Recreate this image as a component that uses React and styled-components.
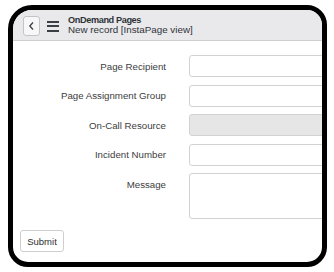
import React from 'react';
import styled, { createGlobalStyle } from 'styled-components';

const GlobalStyle = createGlobalStyle`
  html, body {
    margin: 0;
    padding: 0;
    background: #ffffff;
  }
  body {
    font-family: 'Liberation Sans', Arial, Helvetica, sans-serif;
  }
`

const Device = styled.div`
  box-sizing: border-box;
  width: 319px;
  height: 262px;
  margin: 5px 0 0 8px;
  border: 5px solid #000;
  border-radius: 24px 20px 20px 20px;
  overflow: hidden;
  background: #fff;
  display: flex;
  flex-direction: column;
`

const Header = styled.div`
  box-sizing: border-box;
  height: 31px;
  flex-shrink: 0;
  display: flex;
  align-items: center;
  padding-left: 10px;
  padding-top: 2px;
  background: #e9e9eb;
  border-bottom: 1px solid #cfcfd2;
`

const BackButton = styled.div`
  box-sizing: border-box;
  width: 17px;
  height: 20px;
  display: flex;
  align-items: center;
  justify-content: center;
  background: #f7f7f8;
  border: 1px solid #c4c4c8;
  border-radius: 3px;
`

const Burger = styled.div`
  display: flex;
  flex-direction: column;
  gap: 2.5px;
  margin-left: 7px;
  span {
    display: block;
    width: 12px;
    height: 2px;
    background: #3a3f45;
  }
`

const TitleBlock = styled.div`
  display: flex;
  flex-direction: column;
  margin-left: 9px;
  margin-top: -3px;
  color: #2e3338;
  line-height: 10px;
`

const Title = styled.div`
  font-size: 9.2px;
  font-weight: bold;
  letter-spacing: -0.4px;
`

const Subtitle = styled.div`
  font-size: 9.8px;
`

const Form = styled.div`
  display: flex;
  flex-direction: column;
  gap: 7.5px;
  padding-top: 14px;
`

const Row = styled.div`
  display: flex;
  align-items: ${p => (p.top ? 'flex-start' : 'center')};
`

const Label = styled.div`
  width: 153px;
  flex-shrink: 0;
  text-align: right;
  font-size: 9.7px;
  color: #3d3d3d;
  padding-top: ${p => (p.top ? '6px' : '0')};
`

const Input = styled.div`
  box-sizing: border-box;
  flex-shrink: 0;
  width: 200px;
  height: ${p => (p.tall ? '46px' : '22px')};
  margin-left: 23px;
  border: 1px solid #d2d2d2;
  border-radius: 3px;
  background: ${p => (p.disabled ? '#e6e6e7' : '#fff')};
`

const Footer = styled.div`
  padding: 11px 0 0 7px;
`

const SubmitButton = styled.button`
  box-sizing: border-box;
  width: 44px;
  height: 22px;
  padding: 0;
  background: #fff;
  border: 1px solid #cfcfcf;
  border-radius: 3px;
  font-family: 'Liberation Sans', Arial, Helvetica, sans-serif;
  font-size: 9.5px;
  color: #2e2e2e;
`

const fields = [
  { label: 'Page Recipient' },
  { label: 'Page Assignment Group' },
  { label: 'On-Call Resource', disabled: true },
  { label: 'Incident Number' },
  { label: 'Message', tall: true },
];

export default function App() {
  return (
    <>
      <GlobalStyle />
      <Device>
        <Header>
          <BackButton>
            <svg width="7" height="10" viewBox="0 0 7 10">
              <path d="M5 1.5 L1.8 5 L5 8.5" fill="none" stroke="#3a3f45" strokeWidth="1.3" />
            </svg>
          </BackButton>
          <Burger>
            <span />
            <span />
            <span />
          </Burger>
          <TitleBlock>
            <Title>OnDemand Pages</Title>
            <Subtitle>New record [InstaPage view]</Subtitle>
          </TitleBlock>
        </Header>
        <Form>
          {fields.map(f => (
            <Row key={f.label} top={f.tall}>
              <Label top={f.tall}>{f.label}</Label>
              <Input disabled={f.disabled} tall={f.tall} />
            </Row>
          ))}
        </Form>
        <Footer>
          <SubmitButton>Submit</SubmitButton>
        </Footer>
      </Device>
    </>
  );
}
